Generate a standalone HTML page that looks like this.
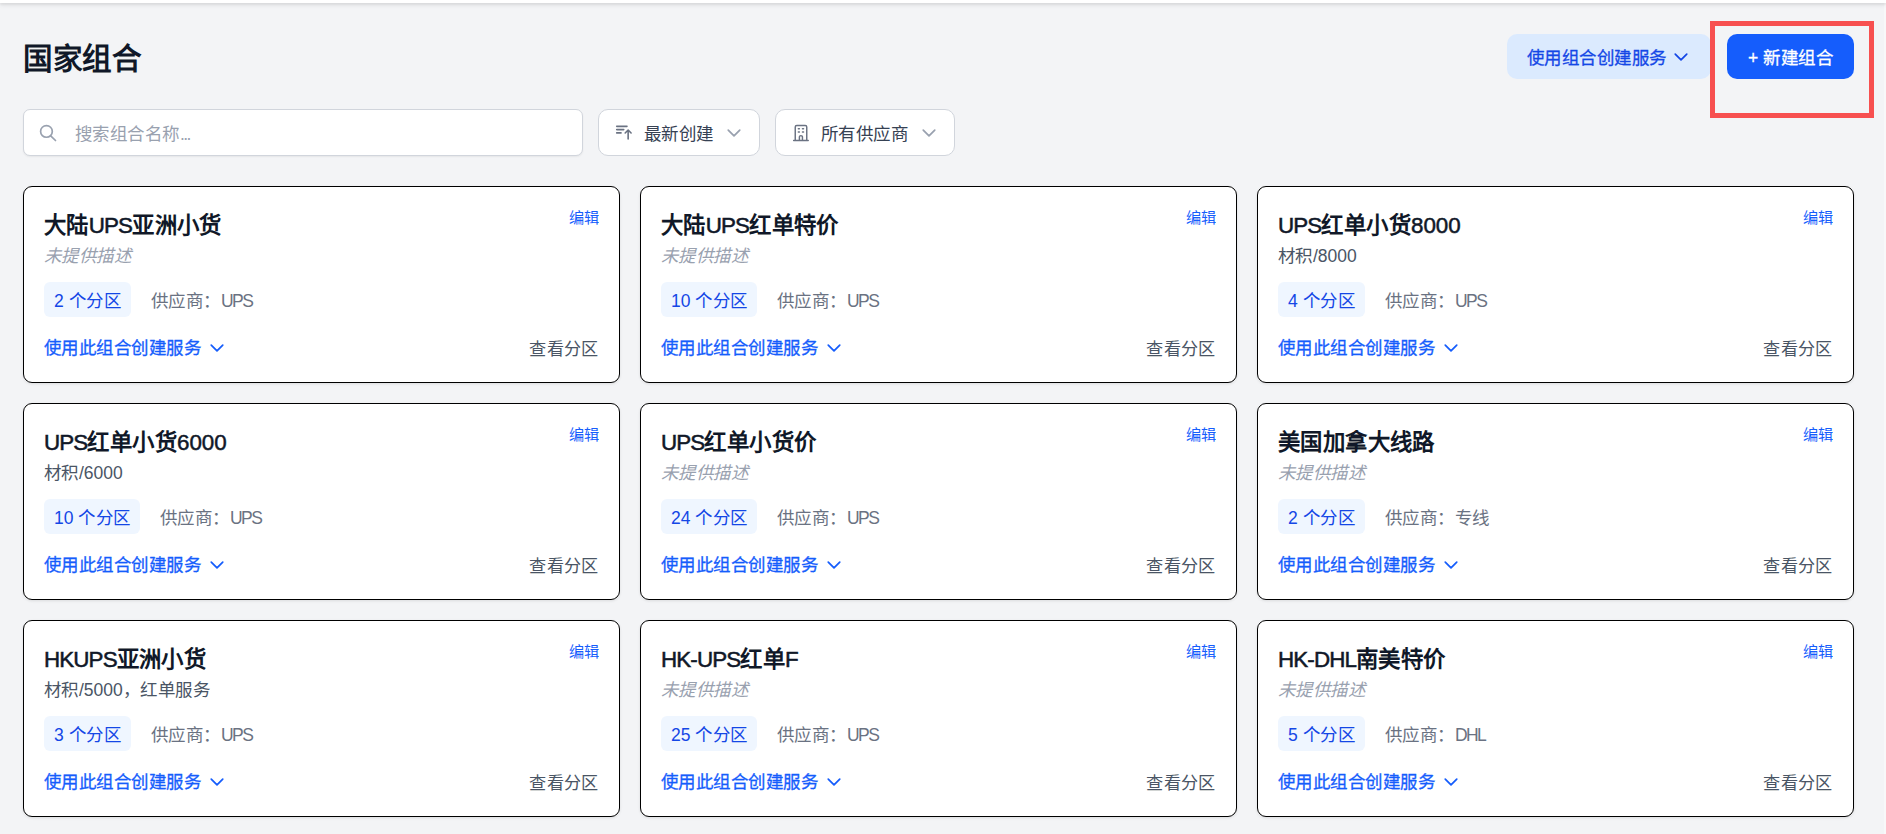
<!DOCTYPE html>
<html lang="zh-CN"><head><meta charset="utf-8"><title>国家组合</title>
<style>
*{box-sizing:border-box;margin:0;padding:0}
html,body{width:1886px;height:834px;overflow:hidden}
body{background:#f3f4f6;font-family:"Liberation Sans",sans-serif;position:relative;color:#101828;font-size:18px}
.t{position:absolute;white-space:nowrap;line-height:24px;transform:scale(0.9722);transform-origin:0 0}
.chev{position:absolute;display:block}
.topbar{position:absolute;left:0;top:0;width:1886px;height:3px;background:#fff;box-shadow:0 2px 4px rgba(0,0,0,.1),0 1.5px 2px rgba(0,0,0,.06)}
.rstrip{position:absolute;right:0;top:3px;width:2px;height:831px;background:#f8f8f9}
h1{position:absolute;left:23px;top:37px;font-size:30px;line-height:44px;font-weight:700;color:#101828;transform:scale(.9867);transform-origin:0 0}
.btn-light{position:absolute;left:1507px;top:34px;width:204px;height:45px;border-radius:10px;background:#dbeafe;color:#1447e6}
.btn-light .t{left:20px;top:12.5px;-webkit-text-stroke:.3px #1447e6}
.btn-blue{position:absolute;left:1727px;top:34px;width:127px;height:45px;border-radius:10px;background:#155dfc;color:#fff}
.btn-blue .t{left:21px;top:12.5px;-webkit-text-stroke:.3px #fff}
.redbox{position:absolute;left:1710px;top:21px;width:164px;height:97px;border:5px solid #f75050}
.search{position:absolute;left:23px;top:109px;width:560px;height:47px;border:1px solid #d1d5dc;border-radius:7px;background:#fff;box-shadow:0 1px 2px rgba(0,0,0,.06)}
.search svg{position:absolute;left:15px;top:14px}
.search .t{left:51px;top:13px;color:#99a1af}
.sel{position:absolute;top:109px;height:47px;border:1px solid #d1d5dc;border-radius:10px;background:#fff;color:#364153}
.sel .ic{position:absolute;color:#6a7282;display:block}
.sel .t{top:13px}
.sel .chev{color:#99a1af}
.card{position:absolute;width:597px;height:197px;background:#fff;border:1px solid #000;border-radius:9px;box-shadow:0 1px 3px rgba(0,0,0,.1)}
.title{left:20px;top:23.5px;font-size:22px;line-height:30px;font-weight:700;color:#101828;transform:scale(1.018)}
.edit{right:20px;top:20px;font-size:15px;line-height:22px;color:#155dfc;transform:scale(1.0133);transform-origin:100% 0}
.desc{left:20px;top:58px;color:#4a5565}
.desc.none{font-style:italic;color:#99a1af}
.meta{position:absolute;left:20px;top:95px;height:34px;width:400px}
.chip{position:absolute;left:0;top:0;height:35px;border-radius:6px;background:#eff6ff;color:#1447e6}
.chip .t{left:10px;top:8.3px}
.sup{top:7.5px;color:#6a7282}
.use{left:20px;top:150px;color:#155dfc;-webkit-text-stroke:.3px #155dfc}
.c-use{color:#155dfc}
.title .lat{letter-spacing:-0.04em;font-weight:400;-webkit-text-stroke:.5px #101828}
.sup .lat{letter-spacing:-0.09em}
.title .dig{font-weight:400;-webkit-text-stroke:.5px #101828}
.view{right:21px;top:150.8px;color:#4a5565;transform-origin:100% 0;transform:scale(.953)}
</style></head><body>
<div class="rstrip"></div>
<div class="topbar"></div>
<h1>国家组合</h1>
<div class="btn-light"><span class="t">使用组合创建服务</span><svg class="chev " style="left:167px;top:19px" width="14" height="8" viewBox="0 0 14 8"><path d="M1.25 1.1L7 6.9L12.75 1.1" fill="none" stroke="currentColor" stroke-width="1.7" stroke-linecap="round" stroke-linejoin="round"/></svg></div>
<div class="btn-blue"><span class="t">+ 新建组合</span></div>
<div class="redbox"></div>
<div class="search"><svg width="18" height="18" viewBox="0 0 18 18"><circle cx="7.45" cy="7.4" r="5.85" fill="none" stroke="#99a1af" stroke-width="1.7"/><path d="M11.7 11.8L16.5 16.5" stroke="#99a1af" stroke-width="1.7" stroke-linecap="round"/></svg><span class="t">搜索组合名称<span style="letter-spacing:-0.09em">...</span></span></div>
<div class="sel" style="left:598px;width:162px"><svg class="ic" style="left:9px;top:8px" width="40" height="30" viewBox="0 0 40 30"><path d="M8.7 8.35H19M8.7 11.6H15.75M8.7 14.9H13.05M20.15 12.3V21M17.2 14.95L20.15 12L23.1 14.95" fill="none" stroke="currentColor" stroke-width="1.6" stroke-linecap="round" stroke-linejoin="round"/></svg><span class="t" style="left:45px">最新创建</span><svg class="chev " style="left:128px;top:19px" width="14" height="8" viewBox="0 0 14 8"><path d="M1.25 1.1L7 6.9L12.75 1.1" fill="none" stroke="currentColor" stroke-width="1.7" stroke-linecap="round" stroke-linejoin="round"/></svg></div>
<div class="sel" style="left:775px;width:180px"><svg class="ic" style="left:9px;top:8px" width="40" height="30" viewBox="0 0 40 30"><path d="M8.65 22.5H23.25M10.25 22.5V8.9Q10.25 7.4 11.75 7.4H20.25Q21.75 7.4 21.75 8.9V22.5M14.4 22.5V18.7Q14.4 17.6 15.9 17.6Q17.45 17.6 17.45 18.7V22.5" fill="none" stroke="currentColor" stroke-width="1.45" stroke-linecap="round" stroke-linejoin="round"/><path d="M13.35 10.8H14.35M17.5 10.8H18.5M13.35 14H14.35M17.5 14H18.5" stroke="currentColor" stroke-width="1.5" stroke-linecap="round"/></svg><span class="t" style="left:45px">所有供应商</span><svg class="chev " style="left:146px;top:19px" width="14" height="8" viewBox="0 0 14 8"><path d="M1.25 1.1L7 6.9L12.75 1.1" fill="none" stroke="currentColor" stroke-width="1.7" stroke-linecap="round" stroke-linejoin="round"/></svg></div>
<div class="card" style="left:23px;top:186px">
<div class="t title">大陆<span class="lat">UPS</span>亚洲小货</div><div class="t edit">编辑</div>
<div class="t desc none">未提供描述</div>
<div class="meta"><div class="chip" style="width:87px"><span class="t">2 个分区</span></div><div class="t sup" style="left:107px">供应商：<span class="lat">UPS</span></div></div>
<div class="t use">使用此组合创建服务</div><svg class="chev c-use" style="left:186px;top:157px" width="14" height="8" viewBox="0 0 14 8"><path d="M1.25 1.1L7 6.9L12.75 1.1" fill="none" stroke="currentColor" stroke-width="1.7" stroke-linecap="round" stroke-linejoin="round"/></svg><div class="t view">查看分区</div>
</div><div class="card" style="left:640px;top:186px">
<div class="t title">大陆<span class="lat">UPS</span>红单特价</div><div class="t edit">编辑</div>
<div class="t desc none">未提供描述</div>
<div class="meta"><div class="chip" style="width:96px"><span class="t">10 个分区</span></div><div class="t sup" style="left:116px">供应商：<span class="lat">UPS</span></div></div>
<div class="t use">使用此组合创建服务</div><svg class="chev c-use" style="left:186px;top:157px" width="14" height="8" viewBox="0 0 14 8"><path d="M1.25 1.1L7 6.9L12.75 1.1" fill="none" stroke="currentColor" stroke-width="1.7" stroke-linecap="round" stroke-linejoin="round"/></svg><div class="t view">查看分区</div>
</div><div class="card" style="left:1257px;top:186px">
<div class="t title"><span class="lat">UPS</span>红单小货<span class="dig">8000</span></div><div class="t edit">编辑</div>
<div class="t desc">材积/8000</div>
<div class="meta"><div class="chip" style="width:87px"><span class="t">4 个分区</span></div><div class="t sup" style="left:107px">供应商：<span class="lat">UPS</span></div></div>
<div class="t use">使用此组合创建服务</div><svg class="chev c-use" style="left:186px;top:157px" width="14" height="8" viewBox="0 0 14 8"><path d="M1.25 1.1L7 6.9L12.75 1.1" fill="none" stroke="currentColor" stroke-width="1.7" stroke-linecap="round" stroke-linejoin="round"/></svg><div class="t view">查看分区</div>
</div><div class="card" style="left:23px;top:403px">
<div class="t title"><span class="lat">UPS</span>红单小货<span class="dig">6000</span></div><div class="t edit">编辑</div>
<div class="t desc">材积/6000</div>
<div class="meta"><div class="chip" style="width:96px"><span class="t">10 个分区</span></div><div class="t sup" style="left:116px">供应商：<span class="lat">UPS</span></div></div>
<div class="t use">使用此组合创建服务</div><svg class="chev c-use" style="left:186px;top:157px" width="14" height="8" viewBox="0 0 14 8"><path d="M1.25 1.1L7 6.9L12.75 1.1" fill="none" stroke="currentColor" stroke-width="1.7" stroke-linecap="round" stroke-linejoin="round"/></svg><div class="t view">查看分区</div>
</div><div class="card" style="left:640px;top:403px">
<div class="t title"><span class="lat">UPS</span>红单小货价</div><div class="t edit">编辑</div>
<div class="t desc none">未提供描述</div>
<div class="meta"><div class="chip" style="width:96px"><span class="t">24 个分区</span></div><div class="t sup" style="left:116px">供应商：<span class="lat">UPS</span></div></div>
<div class="t use">使用此组合创建服务</div><svg class="chev c-use" style="left:186px;top:157px" width="14" height="8" viewBox="0 0 14 8"><path d="M1.25 1.1L7 6.9L12.75 1.1" fill="none" stroke="currentColor" stroke-width="1.7" stroke-linecap="round" stroke-linejoin="round"/></svg><div class="t view">查看分区</div>
</div><div class="card" style="left:1257px;top:403px">
<div class="t title">美国加拿大线路</div><div class="t edit">编辑</div>
<div class="t desc none">未提供描述</div>
<div class="meta"><div class="chip" style="width:87px"><span class="t">2 个分区</span></div><div class="t sup" style="left:107px">供应商：专线</div></div>
<div class="t use">使用此组合创建服务</div><svg class="chev c-use" style="left:186px;top:157px" width="14" height="8" viewBox="0 0 14 8"><path d="M1.25 1.1L7 6.9L12.75 1.1" fill="none" stroke="currentColor" stroke-width="1.7" stroke-linecap="round" stroke-linejoin="round"/></svg><div class="t view">查看分区</div>
</div><div class="card" style="left:23px;top:620px">
<div class="t title"><span class="lat">HKUPS</span>亚洲小货</div><div class="t edit">编辑</div>
<div class="t desc">材积/5000，红单服务</div>
<div class="meta"><div class="chip" style="width:87px"><span class="t">3 个分区</span></div><div class="t sup" style="left:107px">供应商：<span class="lat">UPS</span></div></div>
<div class="t use">使用此组合创建服务</div><svg class="chev c-use" style="left:186px;top:157px" width="14" height="8" viewBox="0 0 14 8"><path d="M1.25 1.1L7 6.9L12.75 1.1" fill="none" stroke="currentColor" stroke-width="1.7" stroke-linecap="round" stroke-linejoin="round"/></svg><div class="t view">查看分区</div>
</div><div class="card" style="left:640px;top:620px">
<div class="t title"><span class="lat">HK-UPS</span>红单<span class="lat">F</span></div><div class="t edit">编辑</div>
<div class="t desc none">未提供描述</div>
<div class="meta"><div class="chip" style="width:96px"><span class="t">25 个分区</span></div><div class="t sup" style="left:116px">供应商：<span class="lat">UPS</span></div></div>
<div class="t use">使用此组合创建服务</div><svg class="chev c-use" style="left:186px;top:157px" width="14" height="8" viewBox="0 0 14 8"><path d="M1.25 1.1L7 6.9L12.75 1.1" fill="none" stroke="currentColor" stroke-width="1.7" stroke-linecap="round" stroke-linejoin="round"/></svg><div class="t view">查看分区</div>
</div><div class="card" style="left:1257px;top:620px">
<div class="t title"><span class="lat">HK-DHL</span>南美特价</div><div class="t edit">编辑</div>
<div class="t desc none">未提供描述</div>
<div class="meta"><div class="chip" style="width:87px"><span class="t">5 个分区</span></div><div class="t sup" style="left:107px">供应商：<span class="lat">DHL</span></div></div>
<div class="t use">使用此组合创建服务</div><svg class="chev c-use" style="left:186px;top:157px" width="14" height="8" viewBox="0 0 14 8"><path d="M1.25 1.1L7 6.9L12.75 1.1" fill="none" stroke="currentColor" stroke-width="1.7" stroke-linecap="round" stroke-linejoin="round"/></svg><div class="t view">查看分区</div>
</div>
</body></html>
